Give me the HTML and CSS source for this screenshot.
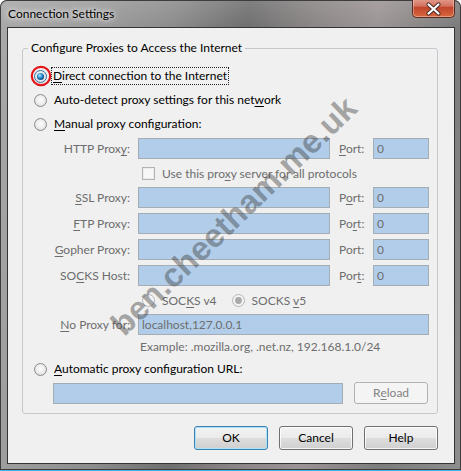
FILE: index.html
```html
<!DOCTYPE html>
<html>
<head>
<meta charset="utf-8">
<title>Connection Settings</title>
<link rel="stylesheet" href="styles.css">
</head>
<body>
<svg class="defs" width="0" height="0" aria-hidden="true">
  <defs>
    <radialGradient id="rfill" cx="50%" cy="45%" r="60%">
      <stop offset="0" stop-color="#fdfdfd"/>
      <stop offset="0.6" stop-color="#ececec"/>
      <stop offset="1" stop-color="#d6d6d6"/>
    </radialGradient>
    <radialGradient id="rdot" cx="40%" cy="35%" r="70%">
      <stop offset="0" stop-color="#b9ecff"/>
      <stop offset="0.45" stop-color="#2b93d6"/>
      <stop offset="1" stop-color="#0b3e74"/>
    </radialGradient>
    <linearGradient id="closeg" x1="0" y1="0" x2="0" y2="1">
      <stop offset="0" stop-color="#e9a899"/>
      <stop offset="0.45" stop-color="#d2715e"/>
      <stop offset="0.5" stop-color="#c0442c"/>
      <stop offset="1" stop-color="#d96a3f"/>
    </linearGradient>
  </defs>
</svg>
<div class="window">
  <div class="titlebar">
    <span class="title">Connection Settings</span>
    <div class="close">
      <svg width="43" height="18" viewBox="0 0 43 18">
        <rect x="0.5" y="-3" width="42" height="20.5" rx="4" fill="url(#closeg)" stroke="#5a2a22"/>
        <rect x="1.5" y="-3" width="40" height="19.5" rx="3" fill="none" stroke="rgba(255,255,255,0.35)"/>
        <path d="M16.5 4.5 L26.5 13.5 M26.5 4.5 L16.5 13.5" stroke="#4a2a26" stroke-width="4.2" stroke-linecap="round"/>
        <path d="M16.5 4.5 L26.5 13.5 M26.5 4.5 L16.5 13.5" stroke="#ffffff" stroke-width="2.2" stroke-linecap="round"/>
      </svg>
    </div>
  </div>
  <div class="client">
    <div class="group">
      <div class="legend">Configure Proxies to Access the Internet</div>

      <div class="opt">
        <span class="radio-wrap">
          <svg class="radio" width="13" height="13" viewBox="0 0 13 13"><circle cx="6.5" cy="6.5" r="6" fill="url(#rfill)" stroke="#2f6f9f"/><circle cx="6.5" cy="6.5" r="3.6" fill="url(#rdot)"/></svg>
          <svg class="annot" width="22" height="22" viewBox="0 0 22 22"><circle cx="11" cy="11" r="9.2" fill="none" stroke="#e4161c" stroke-width="2.2"/></svg>
        </span>
        <span class="lbl focus"><u>D</u>irect connection to the Internet</span>
      </div>
      <div class="opt">
        <svg class="radio" width="13" height="13" viewBox="0 0 13 13"><circle cx="6.5" cy="6.5" r="6" fill="url(#rfill)" stroke="#8c8c8c"/></svg>
        <span class="lbl">Auto-detect proxy settings for this net<u>w</u>ork</span>
      </div>
      <div class="opt">
        <svg class="radio" width="13" height="13" viewBox="0 0 13 13"><circle cx="6.5" cy="6.5" r="6" fill="url(#rfill)" stroke="#8c8c8c"/></svg>
        <span class="lbl"><u>M</u>anual proxy configuration:</span>
      </div>

      <div class="proxies">
        <span class="plabel">HTTP Prox<u>y</u>:</span>
        <span class="field"></span>
        <span class="portlabel"><u>P</u>ort:</span>
        <span class="field">0</span>

        <div class="cbrow">
          <span class="checkbox"></span>
          <span class="dis">Use this pro<u>x</u>y server for all protocols</span>
        </div>

        <span class="plabel"><u>S</u>SL Proxy:</span>
        <span class="field"></span>
        <span class="portlabel">P<u>o</u>rt:</span>
        <span class="field">0</span>

        <span class="plabel"><u>F</u>TP Proxy:</span>
        <span class="field"></span>
        <span class="portlabel">Po<u>r</u>t:</span>
        <span class="field">0</span>

        <span class="plabel"><u>G</u>opher Proxy:</span>
        <span class="field"></span>
        <span class="portlabel">Port:</span>
        <span class="field">0</span>

        <span class="plabel">SO<u>C</u>KS Host:</span>
        <span class="field"></span>
        <span class="portlabel">Por<u>t</u>:</span>
        <span class="field">0</span>

        <div class="socksrow">
          <svg class="radio" width="13" height="13" viewBox="0 0 13 13"><circle cx="6.5" cy="6.5" r="6" fill="#f4f4f4" stroke="#b5b5b5"/></svg>
          <span class="dis v4">SOC<u>K</u>S v4</span>
          <svg class="radio" width="13" height="13" viewBox="0 0 13 13"><circle cx="6.5" cy="6.5" r="6" fill="#f4f4f4" stroke="#b5b5b5"/><circle cx="6.5" cy="6.5" r="3.4" fill="#a9a9a9"/></svg>
          <span class="dis">SOCKS <u>v</u>5</span>
        </div>

        <span class="plabel"><u>N</u>o Proxy for:</span>
        <span class="field wide">localhost,127.0.0.1</span>

        <span class="example dis">Example: .mozilla.org, .net.nz, 192.168.1.0/24</span>
      </div>

      <div class="opt auto">
        <svg class="radio" width="13" height="13" viewBox="0 0 13 13"><circle cx="6.5" cy="6.5" r="6" fill="url(#rfill)" stroke="#8c8c8c"/></svg>
        <span class="lbl"><u>A</u>utomatic proxy configuration URL:</span>
      </div>
      <div class="urlrow">
        <span class="field url"></span>
        <span class="btn disabled">R<u>e</u>load</span>
      </div>
    </div>

    <div class="buttons">
      <span class="btn default">OK</span>
      <span class="btn">Cancel</span>
      <span class="btn">Help</span>
    </div>
  </div>
  <div class="watermark">ben.cheetham.me.uk</div>
</div>
</body>
</html>
```
FILE: styles.css
```css
* { box-sizing: border-box; }
html, body { margin: 0; padding: 0; }
body {
  width: 461px;
  height: 471px;
  overflow: hidden;
  background: #ffffff;
  font-family: "Lato", "Open Sans", sans-serif;
  font-size: 12px;
  color: #000;
}
u { text-decoration: underline; text-underline-offset: 2px; }
.defs { position: absolute; width: 0; height: 0; }

.window {
  position: relative;
  width: 461px;
  height: 471px;
  padding: 0 6px 7px 7px;
  border-radius: 7px 7px 0 0;
  background:
    linear-gradient(180deg, rgba(255,255,255,0.12) 0, rgba(0,0,0,0) 27px),
    linear-gradient(100deg, #a9a9a9 0%, #9a9a9a 20%, #8d8d8d 32%, #6f6f6f 46%, #8a8585 58%, #9c9494 70%, #7c7c7c 85%, #8e8e8e 100%);
  box-shadow: inset 0 0 0 1px #3d3d3d;
  border-bottom: 1px solid #3bb3e4;
}

.titlebar {
  height: 27px;
  display: flex;
  justify-content: space-between;
  align-items: flex-start;
  padding-left: 1px;
}
.title {
  padding-top: 6px;
  line-height: 15px;
  color: #000;
  text-shadow: 0 0 5px rgba(255,255,255,0.95), 0 0 9px rgba(255,255,255,0.8);
}
.close { height: 18px; margin-right: 0; }
.close svg { display: block; }

.client {
  height: 437px;
  border: 1px solid #343434;
  background: #f0f0f0;
  padding: 20px 0 0 14px;
}

.group {
  position: relative;
  width: 416px;
  height: 366px;
  border: 1px solid #c4c8cc;
  border-radius: 3px;
}
.legend {
  display: inline-block;
  margin: -9px 0 0 5px;
  padding: 0 3px;
  height: 16px;
  line-height: 16px;
  background: #f0f0f0;
  vertical-align: top;
}

.opt {
  display: flex;
  align-items: center;
  height: 24px;
  padding-left: 11px;
}
.opt:first-of-type { margin-top: 7px; }
.radio { display: block; flex: none; }
.radio-wrap { position: relative; display: block; width: 13px; height: 13px; }
.annot { position: absolute; left: -4.5px; top: -4.5px; }
.lbl { margin-left: 6px; line-height: 16px; padding: 0 1px; }
.focus { outline: 1px dotted #222; outline-offset: 0; margin-left: 5px; }

.proxies {
  display: grid;
  grid-template-columns: 115px 192px 43px 56px;
  grid-auto-rows: auto;
  row-gap: 5px;
  margin-top: 2px;
  color: #6d6d6d;
}
.plabel {
  text-align: right;
  padding-right: 8px;
  height: 21px;
  line-height: 21px;
  white-space: nowrap;
}
.portlabel {
  padding-left: 9px;
  height: 21px;
  line-height: 21px;
}
.field {
  display: block;
  height: 21px;
  background: #b1cdea;
  border: 1px solid #a4acb4;
  color: #6d6d6d;
  padding-left: 3px;
  line-height: 19px;
  white-space: nowrap;
}
.field.wide { grid-column: 2 / 5; }
.cbrow {
  grid-column: 2 / 5;
  display: flex;
  align-items: center;
  height: 18px;
  padding-left: 4px;
}
.checkbox {
  width: 13px;
  height: 13px;
  border: 1px solid #b3b3b3;
  background: #f7f7f7;
  box-shadow: inset 0 0 0 1px #ececec;
  margin-right: 7px;
}
.dis { color: #6d6d6d; }
.socksrow {
  grid-column: 2 / 5;
  display: flex;
  align-items: center;
  height: 19px;
  padding-left: 4px;
  margin-bottom: -1px;
}
.socksrow .dis { margin-left: 7px; }
.socksrow .v4 { margin-right: 15px; }
.example {
  grid-column: 2 / 5;
  height: 14px;
  line-height: 14px;
  padding-left: 2px;
}

.opt.auto { height: 22px; margin-top: 4px; }
.urlrow {
  display: flex;
  align-items: flex-start;
  margin-top: 2px;
  padding-left: 30px;
}
.field.url { width: 290px; margin-top: 1px; }

.btn {
  display: flex;
  align-items: center;
  justify-content: center;
  width: 74px;
  height: 24px;
  border: 1px solid #707070;
  border-radius: 3px;
  background: linear-gradient(180deg, #f2f2f2 0%, #ebebeb 48%, #dddddd 52%, #cfcfcf 100%);
  box-shadow: inset 0 0 0 1px rgba(255,255,255,0.8);
  color: #000;
  line-height: 16px;
}
.btn.disabled {
  margin-left: 11px;
  height: 22px;
  border-color: #adb2b5;
  background: #f4f4f4;
  box-shadow: none;
  color: #838383;
}
.btn.default {
  border-color: #3c7fb1;
  box-shadow: inset 0 0 0 1px #a8e3f7;
}
.buttons {
  display: flex;
  justify-content: flex-end;
  gap: 11px;
  width: 416px;
  margin-top: 12px;
}

.watermark {
  position: absolute;
  left: 234px;
  top: 216px;
  transform: translate(-50%, -50%) rotate(-44deg);
  font-family: "Liberation Sans", Arial, sans-serif;
  font-weight: bold;
  font-size: 33px;
  color: rgba(55, 55, 55, 0.42);
  white-space: nowrap;
  pointer-events: none;
}
```
